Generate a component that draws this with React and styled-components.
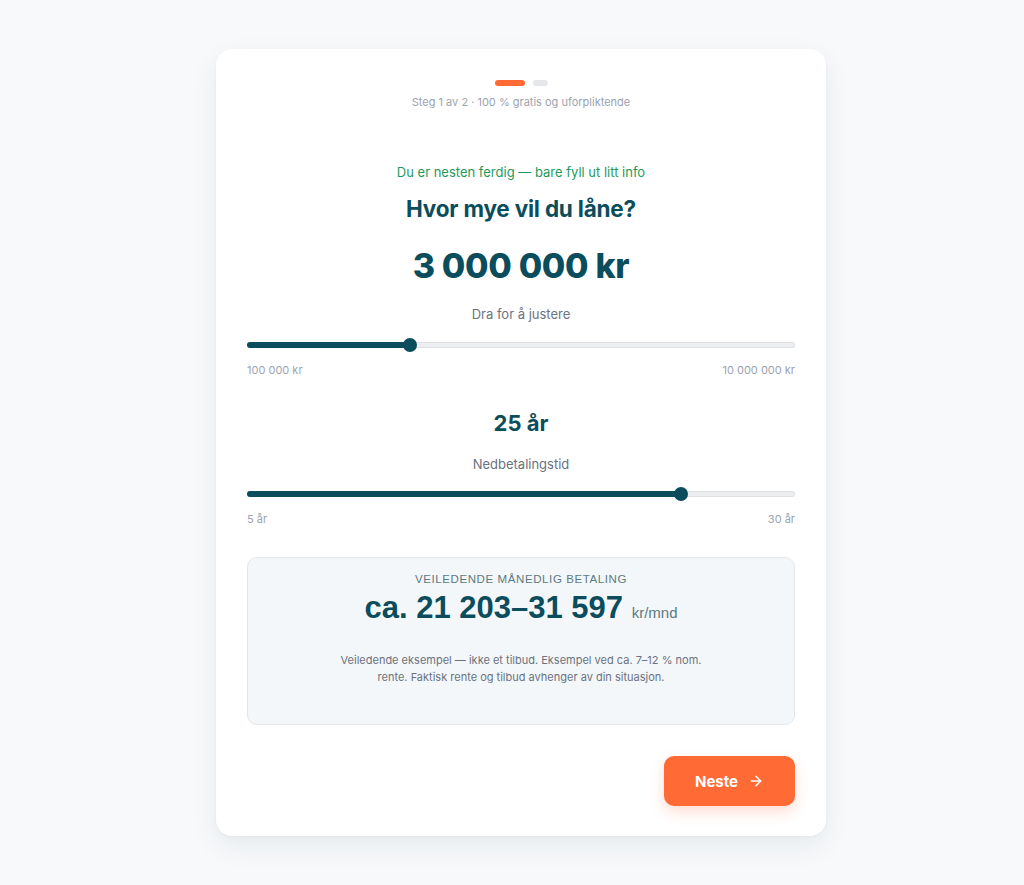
import React, { useState } from 'react'
import styled, { createGlobalStyle } from 'styled-components'

const Global = createGlobalStyle`
  html, body { margin: 0; padding: 0; }
  body {
    background: #f7f9fb;
    font-family: Inter, "Noto Sans", sans-serif;
    -webkit-font-smoothing: antialiased;
  }
`

const teal = '#0b4d5c'
const orange = '#ff6a35'

const fmt = (n) => n.toLocaleString('nb-NO').replace(/\s|,/g, ' ')

const Slider = ({ value, min, max, onChange }) => {
  const ratio = (value - min) / (max - min)
  const handle = (e) => {
    const r = e.currentTarget.getBoundingClientRect()
    const x = Math.min(Math.max(e.clientX - r.left - 7, 0), r.width - 14)
    onChange(min + (x / (r.width - 14)) * (max - min))
  }
  return (
    <SliderWrap onMouseDown={handle}>
      <Track />
      <Fill style={{ width: `calc(7px + ${ratio} * (100% - 14px))` }} />
      <Thumb style={{ left: `calc(${ratio} * (100% - 14px))` }} />
    </SliderWrap>
  )
}

const App = () => {
  const [amount, setAmount] = useState(3000000)
  const [years, setYears] = useState(25)

  return (<>
    <Global />
    <Page>
      <Card>
        <Dots>
          <Dot active />
          <Dot />
        </Dots>
        <StepText>Steg 1 av 2 · 100 % gratis og uforpliktende</StepText>

        <Encourage>Du er nesten ferdig — bare fyll ut litt info</Encourage>
        <Title>Hvor mye vil du låne?</Title>
        <Amount>{fmt(amount)} kr</Amount>
        <Hint>Dra for å justere</Hint>
        <Slider value={amount} min={100000} max={10000000}
          onChange={(v) => setAmount(Math.round(v / 100000) * 100000)} />
        <Range>
          <span>100 000 kr</span>
          <span>10 000 000 kr</span>
        </Range>

        <Years>{years} år</Years>
        <Hint small>Nedbetalingstid</Hint>
        <Slider value={years} min={5} max={30}
          onChange={(v) => setYears(Math.round(v))} />
        <Range>
          <span>5 år</span>
          <span>30 år</span>
        </Range>

        <Estimate>
          <EstLabel>Veiledende månedlig betaling</EstLabel>
          <EstValue>ca. 21 203–31 597 <EstUnit>kr/mnd</EstUnit></EstValue>
          <EstNote>
            Veiledende eksempel — ikke et tilbud. Eksempel ved ca. 7–12 % nom.
            rente. Faktisk rente og tilbud avhenger av din situasjon.
          </EstNote>
        </Estimate>

        <Footer>
          <NextButton>
            Neste
            <svg width="16" height="16" viewBox="0 0 24 24" fill="none" stroke="currentColor"
              strokeWidth="2.2" strokeLinecap="round" strokeLinejoin="round">
              <path d="M5 12h14" />
              <path d="M12 5l7 7-7 7" />
            </svg>
          </NextButton>
        </Footer>
      </Card>
    </Page>
  </>)
}
export default App

const Page = styled.div`
  min-height: 885px;
  display: flex;
  justify-content: center;
  align-items: flex-start;
  padding: 49px 0 0 18px;
  box-sizing: border-box;
`
const Card = styled.div`
  width: 610px;
  box-sizing: border-box;
  background: #fff;
  border-radius: 16px;
  padding: 31px 31px 30px 31px;
  box-shadow: 0 10px 28px rgba(15, 40, 60, 0.07), 0 1px 3px rgba(15, 40, 60, 0.04);
  display: flex;
  flex-direction: column;
  align-items: stretch;
  text-align: center;
`
const Dots = styled.div`
  display: flex;
  justify-content: center;
  gap: 8px;
`
const Dot = styled.div`
  width: ${p => p.active ? '30px' : '15px'};
  height: 6px;
  border-radius: 3px;
  background: ${p => p.active ? orange : '#e5e7eb'};
`
const StepText = styled.div`
  margin-top: 8px;
  font-size: 11px;
  line-height: 16px;
  color: #9ca3af;
`
const Encourage = styled.div`
  margin-top: 53px;
  font-size: 13px;
  line-height: 18px;
  color: #1f9a5b;
`
const Title = styled.h2`
  margin: 14px 0 0;
  font-size: 22.5px;
  line-height: 28px;
  font-weight: 700;
  color: ${teal};
  letter-spacing: -0.2px;
`
const Amount = styled.div`
  margin-top: 23px;
  font-size: 34px;
  line-height: 40px;
  font-weight: 800;
  color: ${teal};
  letter-spacing: -0.3px;
`
const Years = styled.div`
  margin-top: 31px;
  font-size: 22px;
  line-height: 28px;
  font-weight: 700;
  color: ${teal};
`
const Hint = styled.div`
  margin-top: ${p => p.small ? '18px' : '19px'};
  margin-bottom: ${p => p.small ? '14px' : '15px'};
  font-size: 13px;
  line-height: 18px;
  color: #6b7280;
`
const SliderWrap = styled.div`
  position: relative;
  height: 14px;
  cursor: pointer;
`
const Track = styled.div`
  position: absolute;
  left: 0;
  right: 0;
  top: 4px;
  height: 6px;
  border-radius: 3px;
  background: #eceef0;
  box-shadow: inset 0 0 0 1px #dfe2e5;
`
const Fill = styled.div`
  position: absolute;
  left: 0;
  top: 4px;
  height: 6px;
  border-radius: 3px;
  background: ${teal};
`
const Thumb = styled.div`
  position: absolute;
  top: 0;
  width: 14px;
  height: 14px;
  border-radius: 50%;
  background: ${teal};
`
const Range = styled.div`
  margin-top: 10px;
  display: flex;
  justify-content: space-between;
  font-size: 11px;
  line-height: 16px;
  color: #9ca3af;
`
const Estimate = styled.div`
  margin-top: 30px;
  background: #f4f7f9;
  border: 1px solid #e3e7ea;
  border-radius: 10px;
  padding: 13px 24px 38px;
  display: flex;
  flex-direction: column;
  align-items: center;
`
const EstLabel = styled.div`
  font-family: "Liberation Sans", Arial, sans-serif;
  font-size: 11.5px;
  line-height: 16px;
  font-weight: 500;
  letter-spacing: 0.6px;
  text-transform: uppercase;
  color: #5b7a83;
`
const EstValue = styled.div`
  margin-top: 4px;
  font-family: "Liberation Sans", Arial, sans-serif;
  font-size: 31px;
  line-height: 34px;
  font-weight: 700;
  color: ${teal};
`
const EstUnit = styled.span`
  font-size: 15px;
  font-weight: 400;
  color: #5b7a83;
`
const EstNote = styled.p`
  margin: 22px 0 0;
  max-width: 375px;
  font-size: 11px;
  line-height: 17px;
  color: #6b7280;
`
const Footer = styled.div`
  margin-top: 31px;
  display: flex;
  justify-content: flex-end;
`
const NextButton = styled.button`
  width: 131px;
  height: 50px;
  border: none;
  border-radius: 10px;
  background: ${orange};
  color: #fff;
  font-family: Inter, sans-serif;
  font-size: 15px;
  font-weight: 700;
  display: flex;
  align-items: center;
  justify-content: center;
  gap: 10px;
  box-shadow: 0 6px 14px rgba(255, 106, 53, 0.22);
  cursor: pointer;
`
